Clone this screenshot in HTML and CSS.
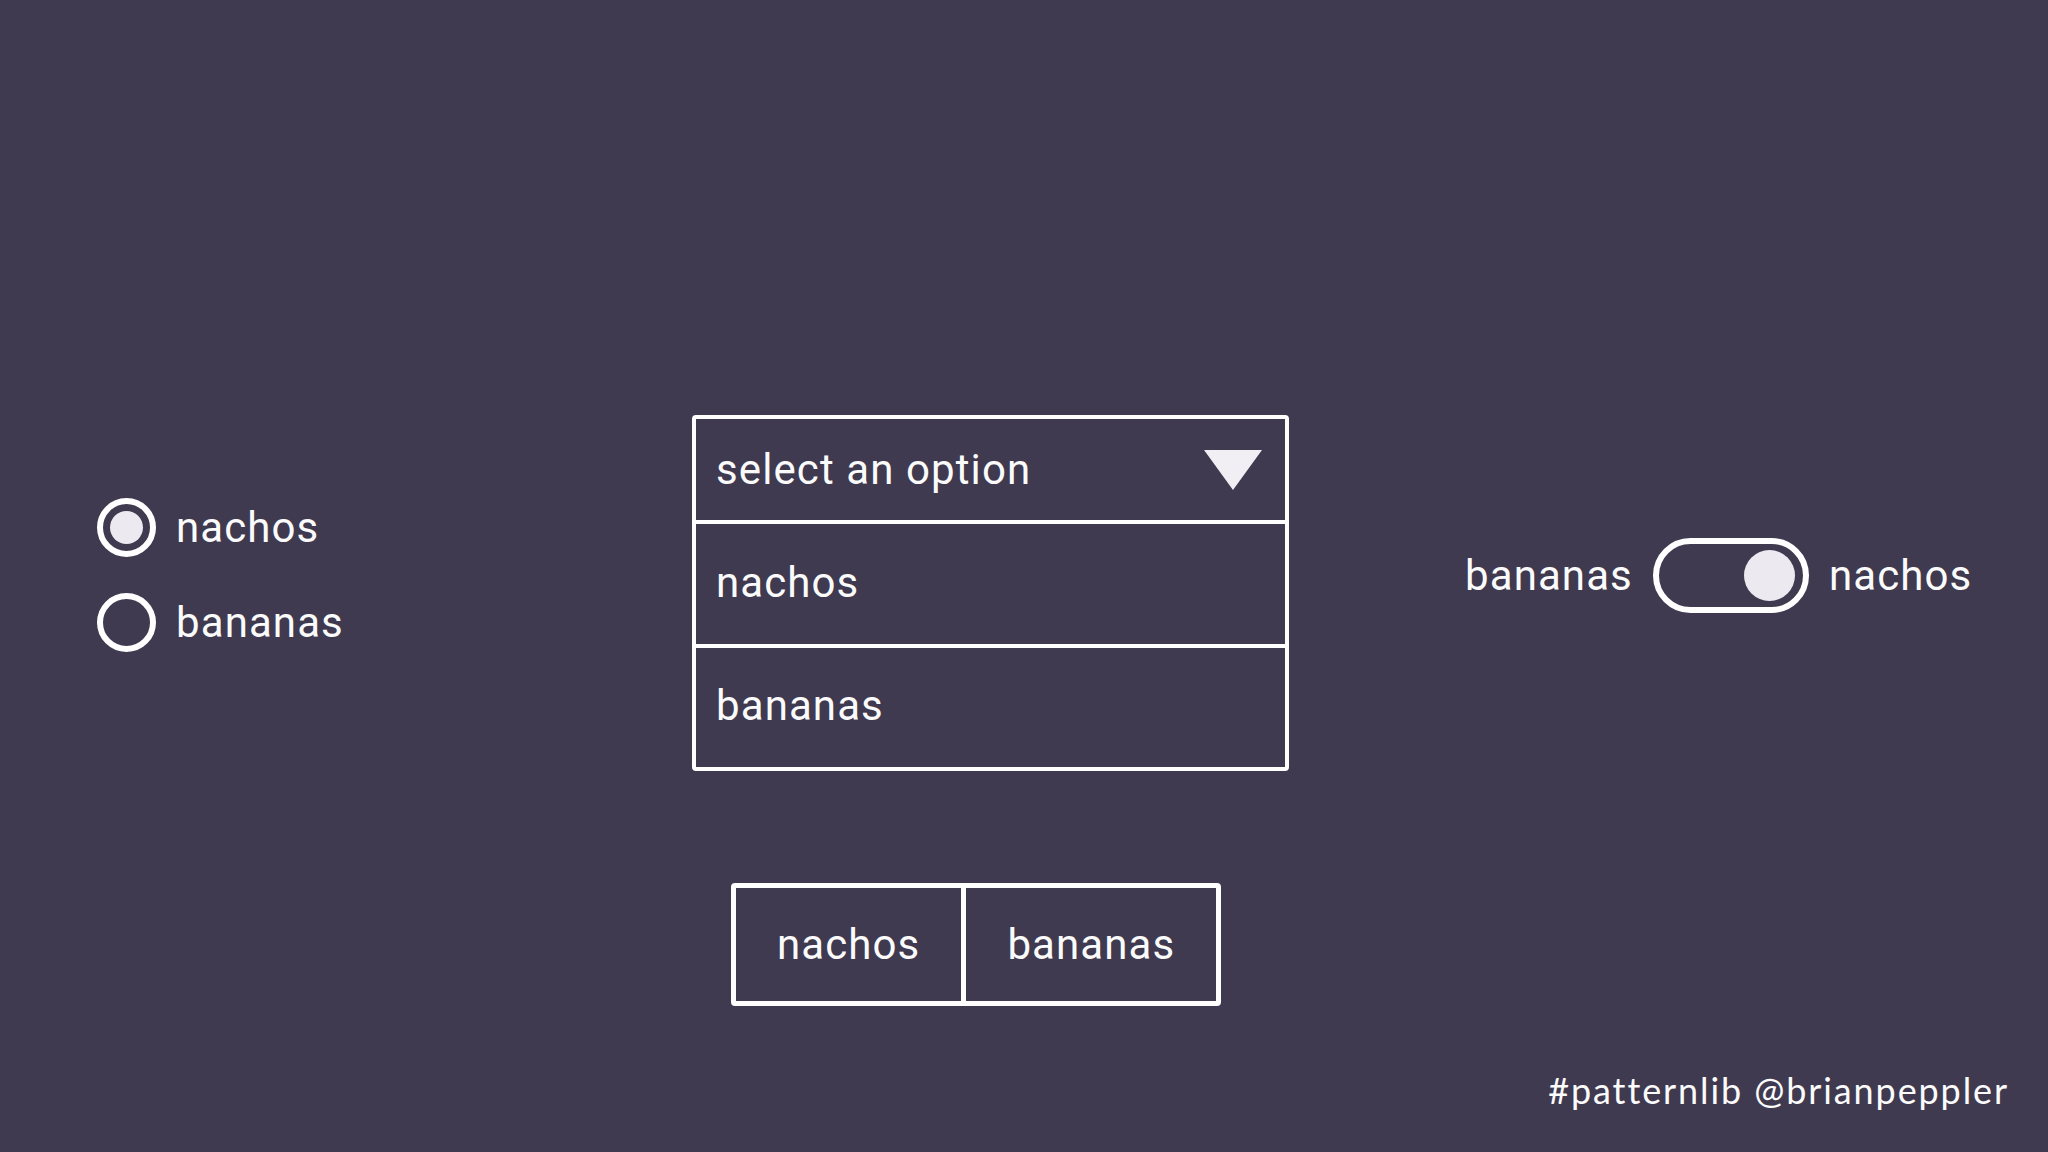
FILE: index.html
```html
<!DOCTYPE html>
<html lang="en">
<head>
<meta charset="utf-8">
<title>Pattern library controls</title>
<link rel="stylesheet" href="styles.css">
</head>
<body>
<div class="page">
  <div class="stage">
    <div class="radios">
      <div class="radio-row">
        <span class="radio radio-on"><span class="radio-dot"></span></span>
        <span class="label">nachos</span>
      </div>
      <div class="radio-row">
        <span class="radio"></span>
        <span class="label">bananas</span>
      </div>
    </div>

    <div class="center">
      <div class="select">
        <div class="select-head">
          <span class="label">select an option</span>
          <svg class="caret" width="58" height="40" viewBox="0 0 58 40"><polygon points="0,0 58,0 29,40" fill="#f1eff4"/></svg>
        </div>
        <div class="select-item"><span class="label">nachos</span></div>
        <div class="select-item select-item-last"><span class="label">bananas</span></div>
      </div>

      <div class="segmented">
        <div class="segment"><span class="label">nachos</span></div>
        <div class="segment segment-last"><span class="label">bananas</span></div>
      </div>
    </div>

    <div class="toggle-group">
      <span class="label">bananas</span>
      <span class="toggle"><span class="knob"></span></span>
      <span class="label">nachos</span>
    </div>
  </div>

  <div class="footer">#patternlib @brianpeppler</div>
</div>
</body>
</html>
```

FILE: styles.css
```css
html, body {
  margin: 0;
  padding: 0;
}

body {
  background: #3f3a50;
  color: #fbfbfc;
  font-family: Roboto, "Liberation Sans", sans-serif;
}

.page {
  width: 2048px;
  height: 1152px;
  display: flex;
  flex-direction: column;
  box-sizing: border-box;
}

.stage {
  display: flex;
  align-items: flex-start;
  padding-top: 415px;
  padding-left: 97px;
}

.label {
  font-size: 42px;
  line-height: 1;
  letter-spacing: 1.1px;
  white-space: nowrap;
}

/* radios */
.radios {
  width: 595px;
  margin-top: 83px;
  display: flex;
  flex-direction: column;
  gap: 36px;
}

.radio-row {
  display: flex;
  align-items: center;
  gap: 20px;
}

.radio {
  width: 59px;
  height: 59px;
  box-sizing: border-box;
  border: 6px solid #ffffff;
  border-radius: 50%;
  display: flex;
  align-items: center;
  justify-content: center;
}

.radio-dot {
  width: 33px;
  height: 33px;
  border-radius: 50%;
  background: #eceaf0;
}

/* center column */
.center {
  width: 597px;
  display: flex;
  flex-direction: column;
}

.select {
  border: 4px solid #ffffff;
  border-radius: 4px;
  display: flex;
  flex-direction: column;
}

.select-head {
  height: 101px;
  border-bottom: 4px solid #ffffff;
  display: flex;
  align-items: center;
  justify-content: space-between;
  padding: 0 23px 0 20px;
}

.caret {
  display: block;
}

.select-item {
  height: 124px;
  box-sizing: border-box;
  border-bottom: 4px solid #ffffff;
  display: flex;
  align-items: center;
  padding: 0 20px 2px;
}

.select-item-last {
  height: 119px;
  border-bottom: none;
  padding-bottom: 4px;
}

.segmented {
  margin-top: 112px;
  margin-left: 39px;
  align-self: flex-start;
  display: flex;
  border: 5px solid #ffffff;
  border-radius: 4px;
}

.segment {
  height: 113px;
  display: flex;
  align-items: center;
  padding: 0 41px;
  border-right: 5px solid #ffffff;
}

.segment-last {
  border-right: none;
}

/* toggle */
.toggle-group {
  margin-top: 123px;
  margin-left: 176px;
  display: flex;
  align-items: center;
  gap: 20px;
}

.toggle {
  width: 156px;
  height: 75px;
  box-sizing: border-box;
  border: 6px solid #ffffff;
  border-radius: 38px;
  display: flex;
  align-items: center;
  justify-content: flex-end;
  padding-right: 8px;
}

.knob {
  width: 51px;
  height: 51px;
  border-radius: 50%;
  background: #eceaf0;
}

/* footer */
.footer {
  margin-top: auto;
  align-self: flex-end;
  padding: 0 39px 44px 0;
  font-family: Lato, "Open Sans", sans-serif;
  font-size: 36px;
  line-height: 1;
  letter-spacing: 1.9px;
}
```
